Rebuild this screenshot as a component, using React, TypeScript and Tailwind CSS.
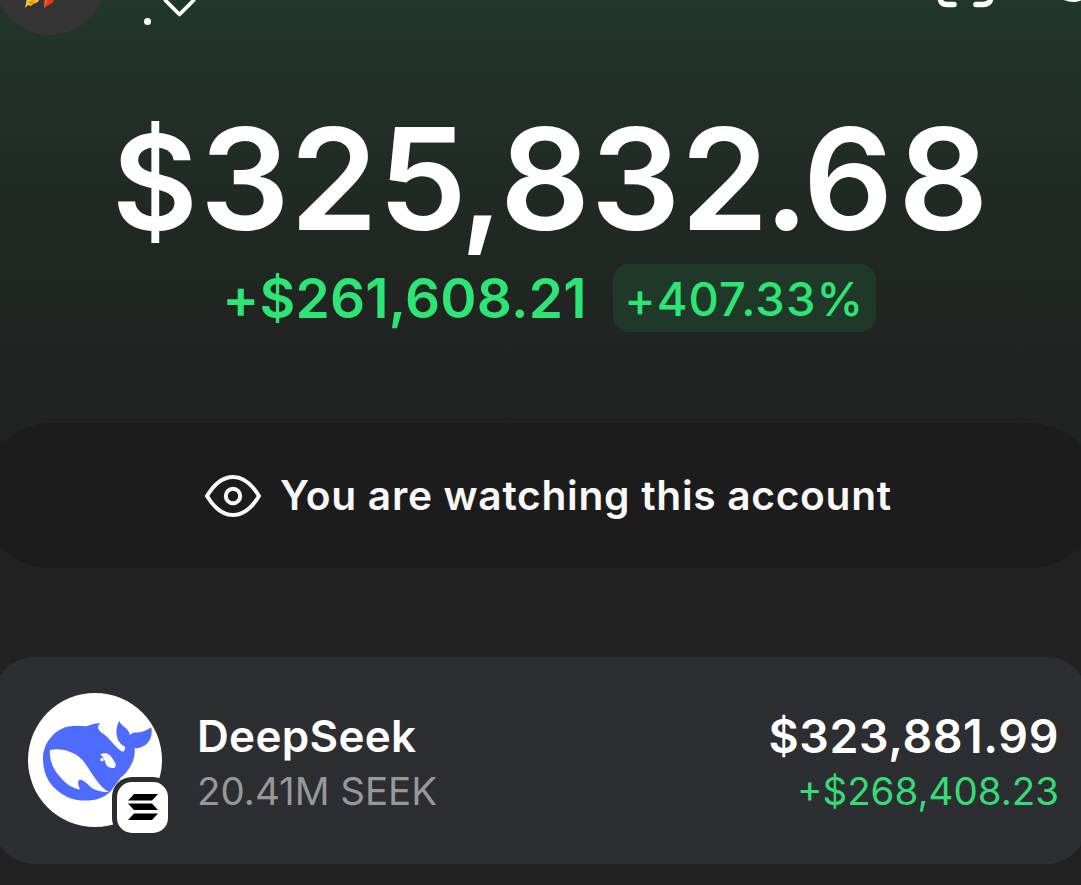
function Header() {
  return (
    <header className="flex h-[90px] items-start overflow-hidden">
      <div className="-mt-[77px] -ml-[6px] flex h-[112px] w-[112px] shrink-0 items-end justify-center rounded-full bg-[#353535]">
        <svg className="mb-[27px] mr-[22px]" width="32" height="20" viewBox="0 0 32 20">
          <path d="M4 10L18 8L15 14L10 16L8 18L5 17L2 20Z" fill="#f6c52c" />
          <path d="M5 14L12 12L9 17Z" fill="#f08a1c" />
          <path d="M22 10H33L29 15L21 20Z" fill="#e8371b" />
          <path d="M22 10H25L21 20Z" fill="#f3722a" />
        </svg>
      </div>
      <div className="mt-[18px] ml-[38px] h-[7px] w-[7px] rounded-full bg-white" />
      <svg className="ml-[12px]" width="33" height="18" viewBox="0 0 33 18" fill="none">
        <path d="M2.500 0.500L16.500 14.500L30.500 0.500" stroke="white" strokeWidth="3.800" strokeLinecap="round" strokeLinejoin="round" />
      </svg>
      <div className="grow" />
      <svg width="60" height="10" viewBox="0 0 60 10" fill="none" stroke="white" strokeWidth="5.500" strokeLinecap="round">
        <path d="M4 -4C4 2 6 4.400 11 4.400H18" />
        <path d="M40 4.400H47C52.500 4.400 55 2 55 -4" />
      </svg>
      <svg className="ml-[60px]" width="25" height="4" viewBox="0 0 25 4">
        <circle cx="17" cy="-20" r="22" fill="white" />
      </svg>
    </header>
  );
}

function Balance() {
  return (
    <section className="flex flex-col items-center">
      <h1 className="h-[174px] pl-[20px] text-[141px] leading-[177px] font-[570] tracking-[0.4px] whitespace-nowrap">
        <span className="text-[132px] tracking-[2px]">$</span>32
        <span className="tracking-[-6.600px]">5</span>
        <span className="text-[134px] tracking-[-3px]">,</span>83
        <span className="tracking-[-4.600px]">2</span>
        <span className="tracking-[-6px]">.</span>
        <span className="tracking-[5px]">6</span>8
      </h1>
      <div className="flex h-[68px] items-center gap-[26px] pl-[17px] font-[580] whitespace-nowrap text-[#2de574]">
        <span className="text-[55px] leading-[68px] tracking-[0.2px]">+$261,608.21</span>
        <span className="flex h-[68px] w-[263px] items-center justify-center rounded-[16px] bg-[#20382a] pt-[1px] text-[47px] leading-none font-[540] tracking-[1.1px]">
          +407.33%
        </span>
      </div>
    </section>
  );
}

function WatchBanner() {
  return (
    <section className="-mx-[20px] mt-[91px] flex h-[145px] items-center justify-center gap-[18px] rounded-[72px] bg-[#1c1c1c] pl-[15px]">
      <svg width="58" height="44" viewBox="0 0 58 44" fill="none" stroke="#f8f8f8" strokeWidth="4">
        <path d="M3 22C9 12 18 3 29 3S49 12 55 22C49 32 40 41 29 41S9 32 3 22Z" strokeLinejoin="round" />
        <circle cx="29" cy="22" r="7.200" />
      </svg>
      <span className="pt-[2px] text-[40.7px] leading-none font-[580] tracking-[0.7px] whitespace-nowrap text-[#f8f8f8]">
        You are watching this account
      </span>
    </section>
  );
}

function TokenLogo() {
  return (
    <div className="relative -mt-[2px] h-[134px] w-[134px] shrink-0">
      <svg width="134" height="134" viewBox="54 39 402 402">
        <circle cx="255" cy="240" r="201" fill="white" />
        <path
          fill="#4d6bfe"
          d="M99 235C99 190 135 145 180 139C200 136 212 137 225 139C240 139 247 128 272 130C260 137 262 150 275 158C300 172 316 205 338 215C344 213 346 206 345 200C318 188 312 150 328 122C332 140 355 140 360 165C372 152 385 162 400 154C412 149 420 143 424 143C430 175 412 203 374 205C378 240 355 275 333 292L300 336C270 367 210 368 170 350C120 325 99 285 99 235Z"
        />
        <path
          fill="white"
          d="M120 210C155 203 200 215 225 250C250 285 270 325 297 336C270 337 245 327 235 314C222 300 210 297 207 300C201 309 206 317 210 328C195 328 170 315 150 290C125 265 117 230 120 210Z"
        />
        <path fill="white" d="M271 223C285 215 300 222 306 234C315 244 322 260 313 263C300 266 288 260 286 247C284 240 278 230 271 223Z" />
        <circle cx="276" cy="239" r="5" fill="white" />
      </svg>
      <div className="absolute top-[84px] left-[84px] flex h-[61px] w-[61px] items-center justify-center rounded-[20px] bg-[#2d2e32]">
        <div className="flex h-[51px] w-[51px] items-center justify-center rounded-[15px] bg-white">
          <svg width="30" height="28" viewBox="0 0 30 28" fill="black">
            <path d="M6 1H30L24 7.500H0Z" />
            <path d="M0 10.500H24L30 17H6Z" />
            <path d="M6 20.500H30L24 27H0Z" />
          </svg>
        </div>
      </div>
    </div>
  );
}

function TokenRow() {
  return (
    <section className="-mx-[6px] mt-[89px] flex h-[207px] items-center rounded-[40px] bg-[#2d2e32] pr-[28px] pl-[34px] whitespace-nowrap">
      <TokenLogo />
      <div className="ml-[35px] flex grow flex-col pt-[4px]">
        <span className="text-[44px] leading-[56px] font-[590] tracking-[0.3px]">DeepSeek</span>
        <span className="text-[38.5px] leading-[54px] text-[#98989a]">20.41M SEEK</span>
      </div>
      <div className="flex flex-col items-end pt-[4px]">
        <span className="text-[46.5px] leading-[56px] font-[560] tracking-[0.6px]">$323,881.99</span>
        <span className="text-[38.5px] leading-[54px] text-[#35dc75]">+$268,408.23</span>
      </div>
    </section>
  );
}

export default function App() {
  return (
    <main className="h-[885px] w-[1081px] overflow-hidden bg-[linear-gradient(180deg,#21372b_0px,#222f28_100px,#202823_230px,#212422_340px,#222222_570px,#222122_885px)] font-['Inter',sans-serif] text-white">
      <Header />
      <Balance />
      <WatchBanner />
      <TokenRow />
    </main>
  );
}
